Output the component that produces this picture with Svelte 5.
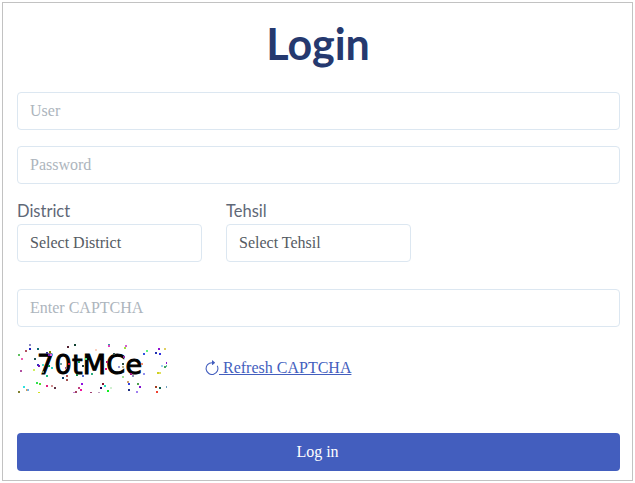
<script>
    // captcha noise: x, y, colour
    const noise = [
        [12,2,"#8a8ac0"],[20,6,"#0a6a70"],[12,6,"#2020c0"],[8,8,"#b05060"],[1,12,"#60c060"],[4,16,"#f060b0"],
        [17,16,"#205050"],[29,10,"#303090"],[32,9,"#808000"],[31,12,"#7010b0"],[33,12,"#e060e0"],[50,4,"#502030"],
        [57,2,"#104030"],[91,2,"#30a0a0"],[91,3,"#e040c0"],[108,3,"#d060d0"],[107,5,"#a0e040"],[78,7,"#fcd0c0"],
        [96,11,"#305050"],[106,14,"#9030a0"],[129,8,"#60f080"],[126,11,"#3050e0"],[141,6,"#9010d0"],[138,10,"#2030b0"],
        [142,11,"#3030e0"],[147,6,"#e0d060"],[124,21,"#f09070"],[144,23,"#a0d0f0"],[147,24,"#40a060"],[149,20,"#9010d0"],
        [149,23,"#60c0a0"],[3,28,"#b050a0"],[16,27,"#d0f060"],[20,22,"#3030c0"],[21,23,"#7010b0"],[25,22,"#50e0d0"],
        [25,29,"#808060"],[31,23,"#109040"],[34,25,"#20d0c0"],[29,33,"#20c080"],[43,21,"#70a0a0"],[51,21,"#e01030"],
        [61,19,"#109040"],[65,23,"#204040"],[68,16,"#50e080"],[48,25,"#a06080"],[49,33,"#b05050"],[49,37,"#a05050"],
        [45,35,"#104070"],[59,32,"#108040"],[65,33,"#5070d0"],[74,31,"#30b080"],[89,19,"#b01060"],[88,26,"#f01080"],
        [105,21,"#305040"],[105,24,"#c0b080"],[101,24,"#9090d0"],[113,31,"#a01080"],[115,33,"#9090c0"],[105,34,"#a0e090"],
        [126,31,"#9090f0"],[140,30,"#d0d020"],[142,30,"#e0e060"],[19,40,"#30e050"],[22,41,"#50e030"],[6,44,"#30e0e0"],
        [9,47,"#e0a050"],[10,47,"#70b0e0"],[1,49,"#808030"],[21,50,"#d0e020"],[29,43,"#e02080"],[34,43,"#d09090"],
        [37,45,"#603040"],[64,41,"#9010e0"],[61,45,"#c04080"],[63,47,"#f010a0"],[58,49,"#a04060"],[56,50,"#c080d0"],
        [73,50,"#a04070"],[81,50,"#c0a0c0"],[85,41,"#801030"],[87,43,"#20e0c0"],[83,45,"#200060"],[93,45,"#d0f0d0"],
        [90,48,"#10f020"],[110,39,"#d0a070"],[111,41,"#3040e0"],[111,47,"#203080"],[120,41,"#50a050"],[122,44,"#8010d0"],
        [119,49,"#a080f0"],[138,44,"#a04020"],[142,45,"#106050"],[149,44,"#70a0c0"],[139,49,"#f04030"]
    ];
</script>

<main class="card">
    <h1>Login</h1>
    <input class="field" type="text" placeholder="User" />
    <input class="field" type="password" placeholder="Password" />

    <div class="selects">
        <div class="group">
            <label for="district">District</label>
            <div id="district" class="select">Select District</div>
        </div>
        <div class="group">
            <label for="tehsil">Tehsil</label>
            <div id="tehsil" class="select">Select Tehsil</div>
        </div>
    </div>

    <input class="field captcha-input" type="text" placeholder="Enter CAPTCHA" />

    <div class="captcha-row">
        <svg class="captcha" width="150" height="51" viewBox="0 0 150 51">
            <text x="20" y="32" textLength="105">70tMCe</text>
            {#each noise as [x, y, c]}
                <rect {x} {y} width="2" height="2" fill={c} />
            {/each}
        </svg>
        <a href="#refresh" class="refresh">
            <svg width="14" height="15" viewBox="2 0 12 14" fill="currentColor">
                <path fill-rule="evenodd" d="M8 3a5 5 0 1 0 4.546 2.914.5.5 0 0 1 .908-.417A6 6 0 1 1 8 2v1z" />
                <path d="M8 4.466V.534a.25.25 0 0 1 .41-.192l2.36 1.966c.12.1.12.284 0 .384L8.41 4.658A.25.25 0 0 1 8 4.466z" />
            </svg>
            Refresh CAPTCHA
        </a>
    </div>

    <button type="button">Log in</button>
</main>

<style>
    :global(body) {
        background: #fff;
        font-family: "Liberation Serif", serif;
    }

    .card {
        box-sizing: border-box;
        width: 631px;
        height: 479px;
        margin: 2px 0 0 2px;
        padding: 0 11px 0 14px;
        border: 1px solid #c2c2c2;
        display: flex;
        flex-direction: column;
    }

    h1 {
        margin: 14px 2px 22px 0;
        height: 53px;
        line-height: 53px;
        text-align: center;
        font-family: Lato, sans-serif;
        font-size: 43px;
        font-weight: 700;
        color: #25396f;
    }

    .field,
    .select {
        box-sizing: border-box;
        height: 38px;
        padding: 0 12px;
        border: 1px solid #dce7f1;
        border-radius: 4px;
        background: #fff;
        font-family: "Liberation Serif", serif;
        font-size: 16px;
        color: #555b63;
    }

    .field {
        display: block;
        width: 603px;
        margin-bottom: 16px;
    }

    .field::placeholder {
        color: #adb5bd;
        opacity: 1;
    }

    .selects {
        display: flex;
        gap: 24px;
        margin-top: 2px;
    }

    .group {
        width: 185px;
    }

    label {
        display: block;
        height: 22px;
        line-height: 18px;
        font-family: Lato, sans-serif;
        font-size: 16.5px;
        color: #5f6877;
    }

    .select {
        line-height: 36px;
    }

    .captcha-input {
        margin-top: 27px;
        margin-bottom: 15px;
    }

    .captcha-row {
        display: flex;
        align-items: center;
        gap: 38px;
    }

    .captcha text {
        font-family: "DejaVu Sans", sans-serif;
        font-size: 27px;
        font-weight: 400;
        stroke: #000;
        stroke-width: 1px;
        fill: #000;
    }

    .refresh {
        font-size: 16px;
        color: #435ebe;
    }

    .refresh svg {
        vertical-align: -2px;
    }

    button {
        box-sizing: border-box;
        width: 603px;
        height: 38px;
        margin-top: 40px;
        padding: 0 2px 0 0;
        border: 0;
        border-radius: 4px;
        background: #435ebe;
        color: #fff;
        font-family: "Liberation Serif", serif;
        font-size: 16px;
    }
</style>
